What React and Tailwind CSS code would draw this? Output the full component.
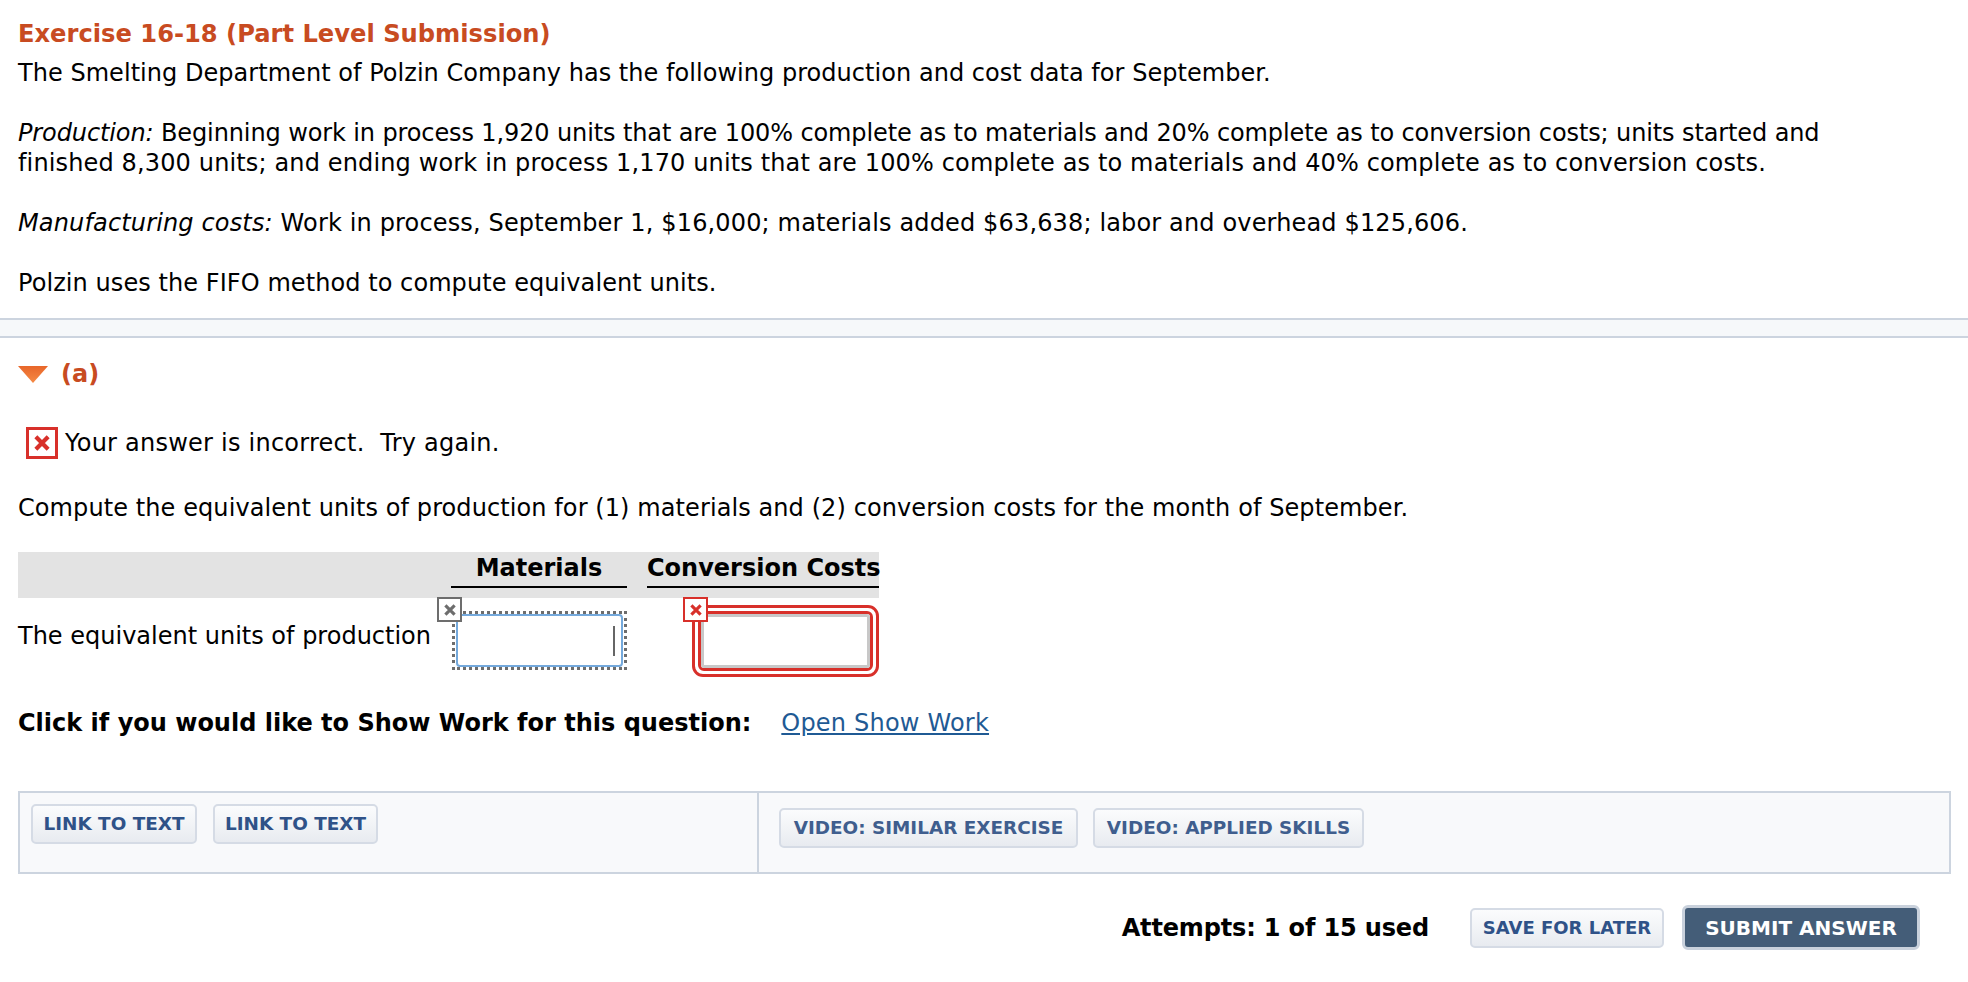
const FONT = "font-['DejaVu_Sans',Verdana,sans-serif]"

function XBadge({ color, box, icon, className }) {
  return (
    <span className={`flex items-center justify-center bg-white ${box} ${className || ''}`} style={{ borderColor: color }}>
      <svg width={icon} height={icon} viewBox="0 0 13 13">
        <path d="M1.5 1.5 L11.5 11.5 M11.5 1.5 L1.5 11.5" stroke={color} strokeWidth="3.4" />
      </svg>
    </span>
  )
}

function LinkButton({ children, className }) {
  return (
    <button
      type="button"
      className={`h-[40px] whitespace-nowrap rounded-[5px] border-2 border-[#d5dbe5] bg-gradient-to-b from-[#fbfcfd] to-[#e8ebf0] text-[18.4px] font-bold ${className}`}
    >
      {children}
    </button>
  )
}

export default function App() {
  return (
    <div className={`${FONT} min-h-screen bg-white text-[24px] leading-[30px] text-black`}>
      <div className="px-[18px] pt-[19px]">
        <h1 className="text-[24.2px] font-bold leading-[30px] text-[#c84b21]">Exercise 16-18 (Part Level Submission)</h1>
        <p className="mt-[9px] tracking-[0.04px]">The Smelting Department of Polzin Company has the following production and cost data for September.</p>
        <p className="mt-[30px]">
          <span className="block whitespace-nowrap tracking-[-0.115px]">
            <em>Production:</em> Beginning work in process 1,920 units that are 100% complete as to materials and 20% complete as to conversion costs; units started and
          </span>
          <span className="block whitespace-nowrap tracking-[0.14px]">
            finished 8,300 units; and ending work in process 1,170 units that are 100% complete as to materials and 40% complete as to conversion costs.
          </span>
        </p>
        <p className="mt-[30px] tracking-[0.15px]">
          <em>Manufacturing costs:</em> Work in process, September 1, $16,000; materials added $63,638; labor and overhead $125,606.
        </p>
        <p className="mt-[30px] tracking-[0.07px]">Polzin uses the FIFO method to compute equivalent units.</p>
      </div>

      <div className="mt-[20px] h-[20px] border-y-2 border-[#ccd4df] bg-[#f6f8fa]" />

      <div className="px-[18px]">
        <div className="mt-[21px] flex items-center gap-[13px]">
          <svg width="30" height="17" viewBox="0 0 30 17" className="shrink-0">
            <defs>
              <linearGradient id="arrow" x1="0" y1="0" x2="0" y2="1">
                <stop offset="0" stopColor="#e8662a" />
                <stop offset="1" stopColor="#f58a45" />
              </linearGradient>
            </defs>
            <path d="M0 0 H30 L15 17 Z" fill="url(#arrow)" />
          </svg>
          <span className="text-[24px] font-bold text-[#c84b21]">(a)</span>
        </div>

        <div className="mt-[38px] flex items-center gap-[7px] pl-[8px]">
          <XBadge color="#d8302a" box="h-[32px] w-[32px] border-[3px]" icon={16} />
          <span className="whitespace-pre tracking-[0.24px]">Your answer is incorrect.  Try again.</span>
        </div>

        <p className="mt-[34px] tracking-[0.09px]">Compute the equivalent units of production for (1) materials and (2) conversion costs for the month of September.</p>

        <div className="mt-[29px] w-[861px]">
          <div className="flex h-[46px] bg-[#e3e3e3] pl-[433px]">
            <div className="h-[36px] w-[176px] border-b-2 border-black text-center font-bold leading-[32px]">Materials</div>
            <div className="ml-[20px] h-[36px] w-[232px] whitespace-nowrap border-b-2 border-black text-center font-bold leading-[32px]">Conversion Costs</div>
          </div>

          <div className="flex h-[80px] items-center">
            <span className="w-[434px] shrink-0 whitespace-nowrap pb-[4px]">The equivalent units of production</span>
            <div className="relative mt-[5px] flex h-[59px] w-[175px] shrink-0 items-center justify-center border-[3px] border-dotted border-[#6d6d6d]">
              <div className="flex h-[53px] w-[167px] items-center justify-end rounded-[4px] border-2 border-[#74a9dc] bg-white pr-[6px]">
                <span className="h-[30px] w-[2px] bg-[#666666]" />
              </div>
              <XBadge color="#6d6d6d" box="h-[25px] w-[25px] border-2" icon={12} className="absolute -left-[18px] -top-[17px]" />
            </div>
            <div className="ml-[20px] flex w-[232px] shrink-0 justify-end">
              <div className="relative mt-[6px] h-[72px] w-[187px] rounded-[11px] border-[3px] border-[#d8302a] bg-white p-[3px]">
                <div className="h-full w-full rounded-[6px] border-[3px] border-[#d8302a] bg-white">
                  <div className="h-full w-full rounded-[3px] border-[3px] border-[#c8c8c8]" />
                </div>
                <XBadge color="#d8302a" box="h-[25px] w-[25px] border-2" icon={12} className="absolute -left-[12px] -top-[11px]" />
              </div>
            </div>
          </div>
        </div>

        <div className="mt-[30px] flex items-center">
          <b>Click if you would like to Show Work for this question:</b>
          <a className="ml-[30px] tracking-[0.2px] text-[#1f5a94] underline">Open Show Work</a>
        </div>

        <div className="mt-[53px] flex h-[83px] w-[1933px] border-2 border-[#ccd4df] bg-[#f8f9fb]">
          <div className="flex w-[739px] items-start gap-[16px] border-r-2 border-[#ccd4df] pl-[11px] pt-[11px]">
            <LinkButton className="w-[166px] text-[#2f5288]">LINK TO TEXT</LinkButton>
            <LinkButton className="w-[165px] text-[#2f5288]">LINK TO TEXT</LinkButton>
          </div>
          <div className="flex items-start gap-[15px] pl-[20px] pt-[15px]">
            <LinkButton className="w-[299px] text-[#3f5e8e]">VIDEO: SIMILAR EXERCISE</LinkButton>
            <LinkButton className="w-[271px] text-[#3f5e8e]">VIDEO: APPLIED SKILLS</LinkButton>
          </div>
        </div>

        <div className="mt-[31px] flex items-center justify-end pr-[30px]">
          <b className="tracking-[-0.15px]">Attempts: 1 of 15 used</b>
          <button type="button" className="ml-[41px] h-[40px] w-[194px] rounded-[5px] border-2 border-[#d5dbe5] bg-gradient-to-b from-[#fbfcfd] to-[#e8ebf0] text-[18px] font-bold text-[#2f5288]">SAVE FOR LATER</button>
          <button type="button" className="ml-[18px] h-[45px] w-[238px] rounded-[6px] border-[3px] border-[#c9d1dc] bg-[#445d78] text-[20px] font-bold text-white">SUBMIT ANSWER</button>
        </div>
      </div>
    </div>
  )
}
